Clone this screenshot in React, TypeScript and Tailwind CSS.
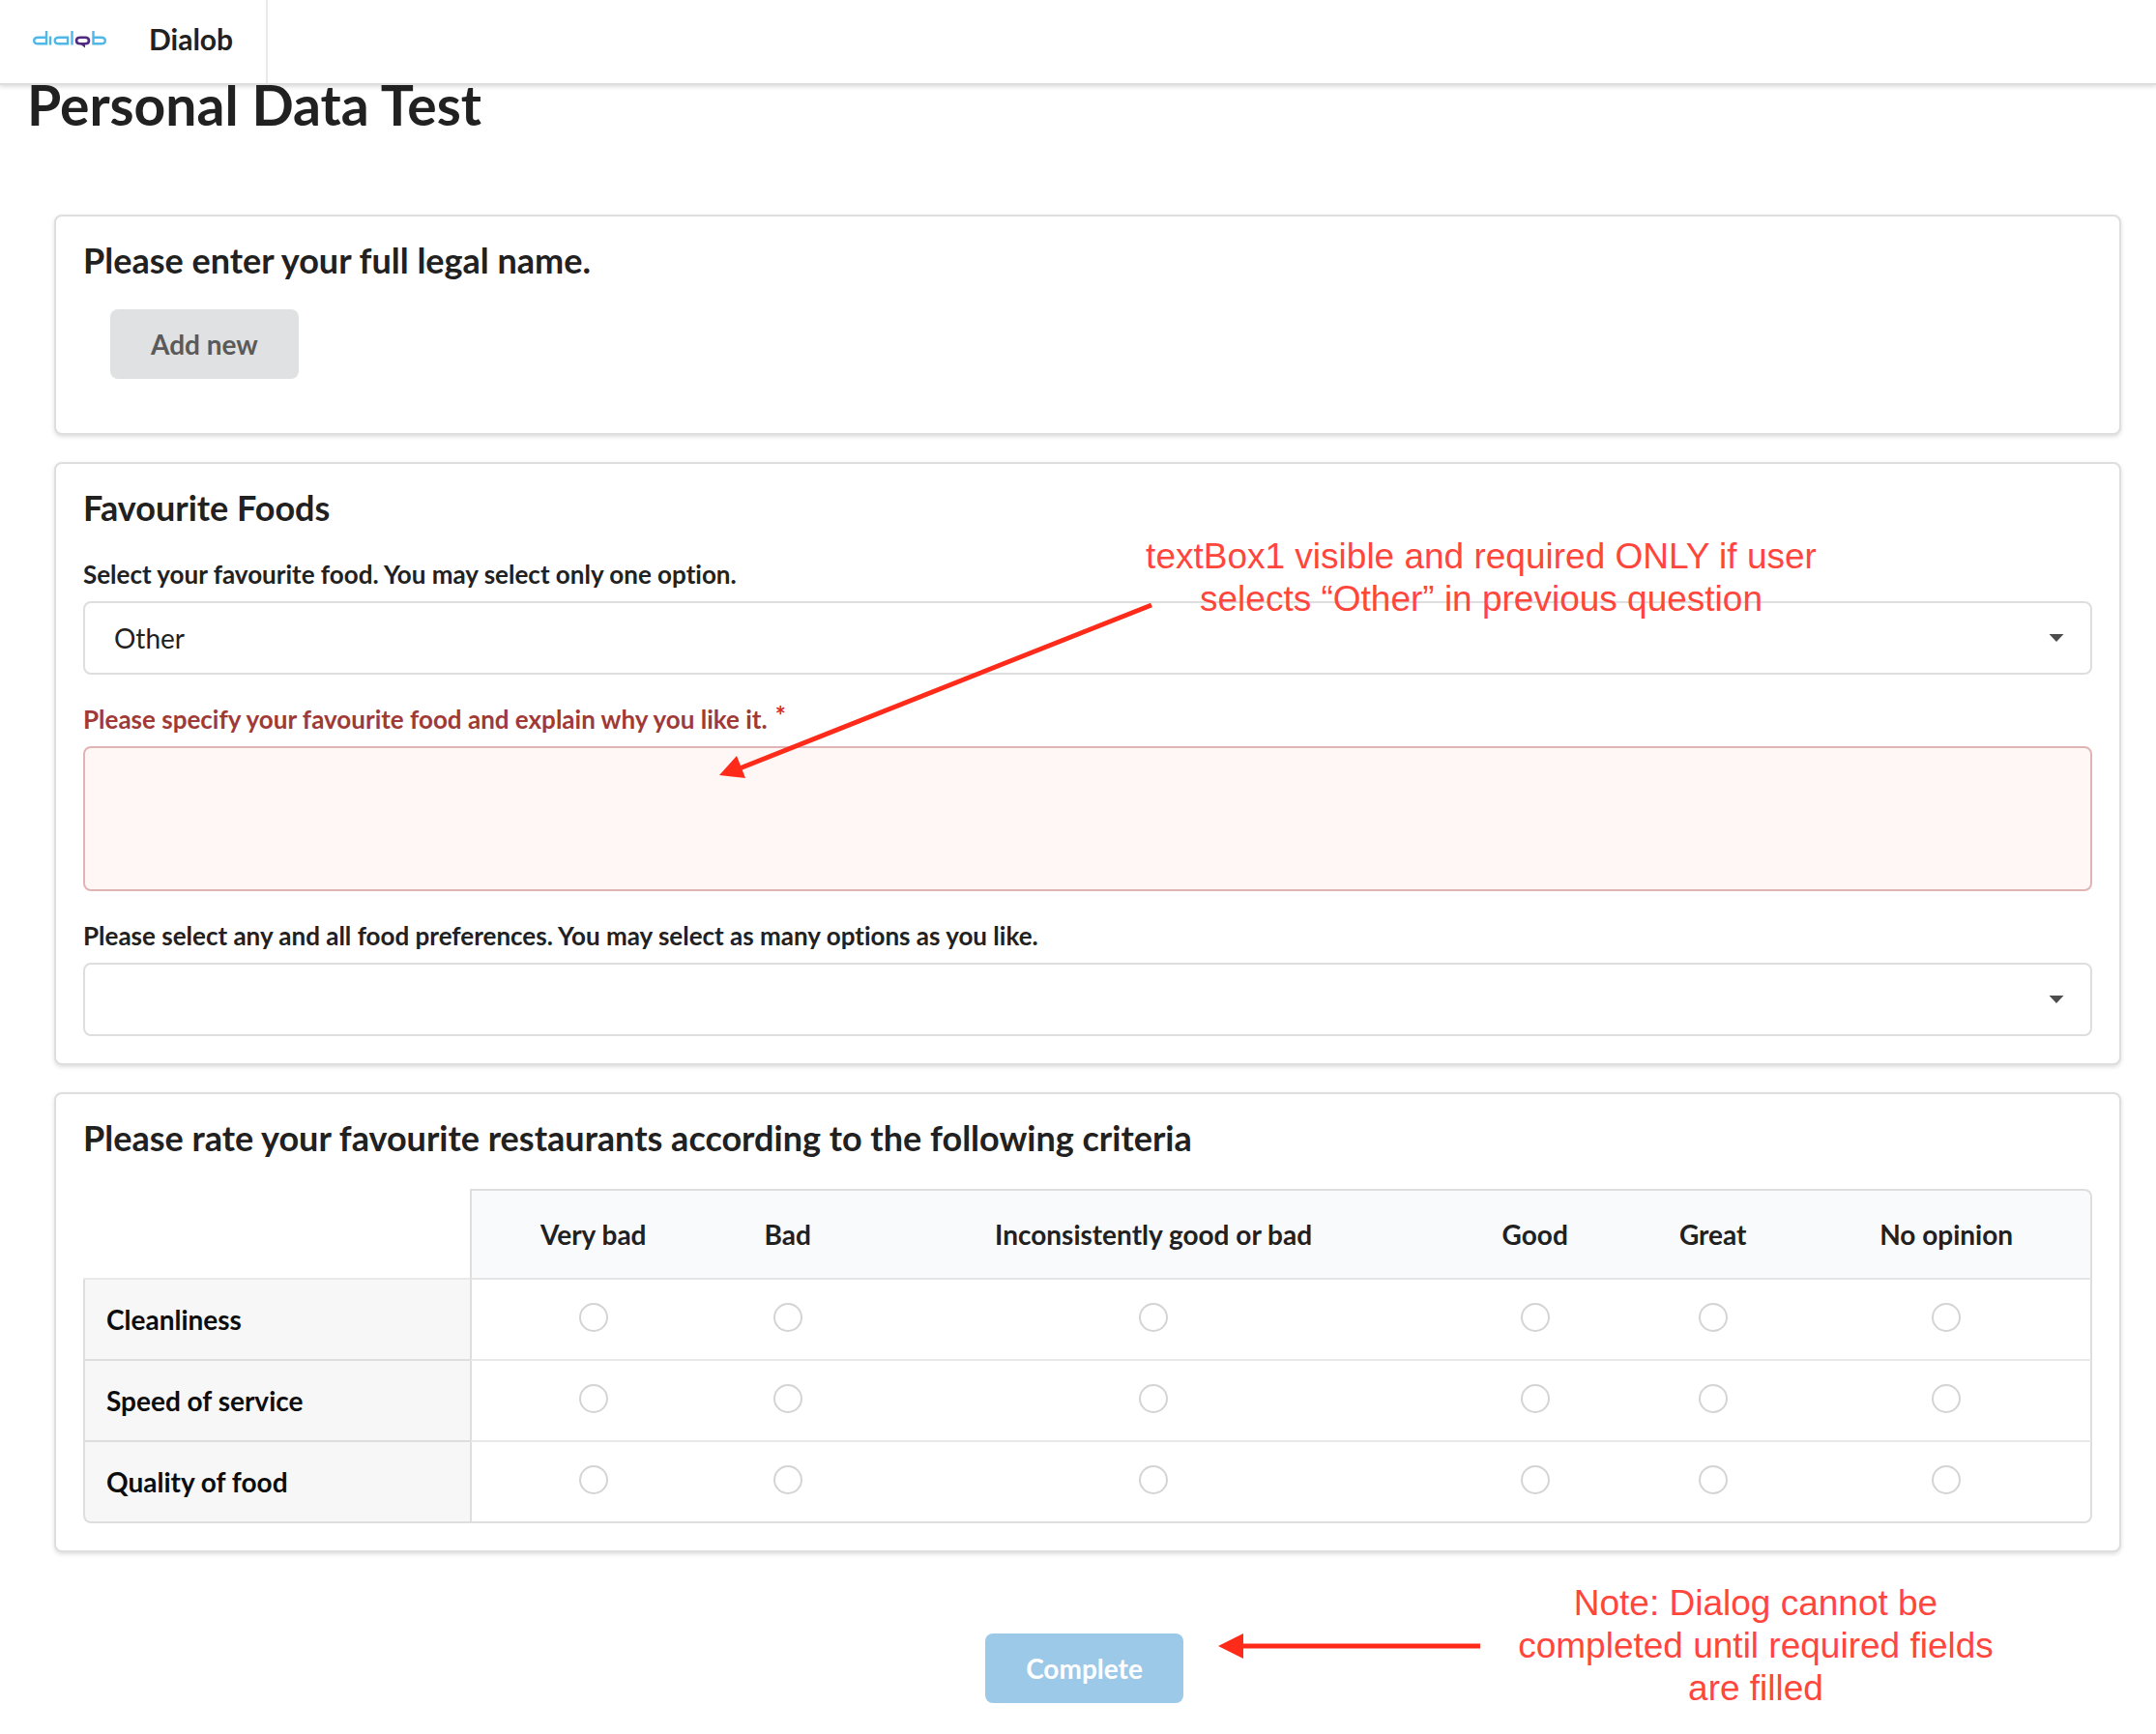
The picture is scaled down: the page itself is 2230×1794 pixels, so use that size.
import React from "react";

const columns = ["Very bad", "Bad", "Inconsistently good or bad", "Good", "Great", "No opinion"];
const rows = ["Cleanliness", "Speed of service", "Quality of food"];

function Logo() {
  return (
    <svg viewBox="0 0 80 20" className="h-5 w-20" fill="none" strokeWidth="2.4" aria-label="dialob" role="img">
      <g stroke="#4fb8e8">
        <path d="M16 2V15.300H7.500Q3.200 15.300 3.200 12T7.500 8.700H16" />
        <path d="M20 7.500V16.500" />
        <path d="M38 16.500V8.700H29Q24.700 8.700 24.700 12T29 15.300H38" />
        <path d="M42.500 2V16.500" />
        <path d="M64.500 2V15.300H72.500Q76.800 15.300 76.800 12T72.500 8.700H64.500" />
      </g>
      <path d="M51 8.700H56Q60 8.700 60 12T56 15.300H51Q47 15.300 47 12T51 8.700Z" stroke="#4f2a7f" strokeWidth="2.600" />
      <path d="M51.500 16H56V19.500Z" fill="#4f2a7f" />
    </svg>
  );
}

function Card({ title, children }: { title: string; children: React.ReactNode }) {
  return (
    <section className="relative rounded-lg border-2 border-[#dededf] bg-white p-7 shadow-[0_2px_4px_rgba(34,36,38,0.15)]">
      <h2 className="-mt-1 mb-[30px] text-4xl leading-[42px] font-bold">{title}</h2>
      {children}
    </section>
  );
}

function Dropdown({ id, options }: { id: string; options: string[] }) {
  return (
    <div className="relative">
      <select
        id={id}
        className="block h-19 w-full appearance-none rounded-lg border-2 border-[#dededf] bg-white px-[30px] text-[28px] text-[#212121]"
      >
        {options.map((o) => (
          <option key={o}>{o}</option>
        ))}
      </select>
      <svg viewBox="0 0 16 8" className="pointer-events-none absolute top-[34px] right-[29px] h-2 w-4" aria-hidden="true">
        <path d="M0.500 0H15.500L8 8Z" fill="#4d4d4d" />
      </svg>
    </div>
  );
}

const labelClass = "mb-2.5 block text-[26px] leading-9 font-bold";

export default function App() {
  return (
    <div className="min-h-screen bg-white font-['Lato',sans-serif] text-[#212121] [font-variant-ligatures:none]">
      <header className="relative flex h-22 border-b-2 border-[#dededf] bg-white shadow-[0_2px_4px_rgba(34,36,38,0.15)]">
        <div className="flex items-center gap-[42px] border-r-2 border-[#e9e9e9] pr-[34px] pb-1.5 pl-8">
          <Logo />
          <span className="text-[30px] leading-10 font-bold">Dialob</span>
        </div>
      </header>

      <main className="pb-8">
        <h1 className="-mt-4 px-7 text-[57px] leading-[72px] font-bold">Personal Data Test</h1>

        <form className="mt-[78px] mr-9 ml-14 flex flex-col gap-7" onSubmit={(e) => e.preventDefault()}>
          <Card title="Please enter your full legal name.">
            <button type="button" className="mb-7 ml-7 block h-18 rounded-lg bg-[#e0e1e2] px-[42px] text-[28px] font-bold text-[#5a5a5a]">
              Add new
            </button>
          </Card>

          <Card title="Favourite Foods">
            <div className="flex flex-col gap-7">
              <div>
                <label htmlFor="food" className={labelClass}>
                  Select your favourite food. You may select only one option.
                </label>
                <Dropdown id="food" options={["Other"]} />
              </div>
              <div>
                <label htmlFor="reason" className="mb-2.5 block text-[26px] leading-9 font-bold text-[#9f3a38]">
                  Please specify your favourite food and explain why you like it.
                  <span className="ml-2 inline-block -translate-y-1 text-[#db2828]">*</span>
                </label>
                <textarea
                  id="reason"
                  required
                  className="block h-[150px] w-full resize-none rounded-lg border-2 border-[#e0b4b4] bg-[#fff6f6] p-7 text-[28px] outline-none"
                />
              </div>
              <div>
                <label htmlFor="preferences" className={labelClass}>
                  Please select any and all food preferences. You may select as many options as you like.
                </label>
                <Dropdown id="preferences" options={[""]} />
              </div>
            </div>

            <svg viewBox="0 0 450 182" className="pointer-events-none absolute top-[143px] left-[685px] h-[182px] w-[450px]" aria-hidden="true">
              <path d="M22 172L448 3" stroke="#fe2b1b" strokeWidth="5" />
              <path d="M1 179L19 159L28 182Z" fill="#fe2b1b" />
            </svg>
            <p className="pointer-events-none absolute top-[74px] left-[1114px] w-[720px] text-center font-['Liberation_Sans',sans-serif] text-[37px] leading-[44px] text-[#ff463c]">
              textBox1 visible and required ONLY if user selects “Other” in previous question
            </p>
          </Card>

          <Card title="Please rate your favourite restaurants according to the following criteria">
            <table className="mt-8 w-full border-separate border-spacing-0 text-[28px]">
              <thead>
                <tr className="h-[94px]">
                  <td className="border-b-2 border-[#e9e9e9]" />
                  {columns.map((c) => (
                    <th
                      key={c}
                      scope="col"
                      className="border-t-2 border-b-2 border-t-[#dededf] border-b-[#e4e5e6] bg-[#f9fafb] px-[22px] font-bold last:rounded-tr-lg last:border-r-2 last:border-r-[#dededf] first-of-type:border-l-2 first-of-type:border-l-[#dededf]"
                    >
                      {c}
                    </th>
                  ))}
                </tr>
              </thead>
              <tbody>
                {rows.map((r) => (
                  <tr key={r} className="group h-[84px]">
                    <th
                      scope="row"
                      className="border-b-2 border-l-2 border-[#dededf] bg-[#f7f7f7] pr-[18px] pl-[22px] text-left font-bold text-[#0d0d0d] group-last:rounded-bl-lg"
                    >
                      {r}
                    </th>
                    {columns.map((c) => (
                      <td
                        key={c}
                        className="border-b-2 border-[#e9e9e9] px-[22px] group-last:border-b-[#dededf] last:border-r-2 last:border-r-[#dededf] group-last:last:rounded-br-lg first-of-type:border-l-2 first-of-type:border-l-[#dededf]"
                      >
                        <input
                          type="radio"
                          name={r}
                          aria-label={`${r}: ${c}`}
                          className="mx-auto mb-1 block size-[30px] appearance-none rounded-full border-2 border-[#d4d4d5] bg-white"
                        />
                      </td>
                    ))}
                  </tr>
                ))}
              </tbody>
            </table>
          </Card>

          <div className="relative mt-14 flex justify-center">
            <button type="submit" disabled className="mr-[7px] block h-18 rounded-lg bg-[#9dc9e9] px-[42px] text-[28px] font-bold text-white">
              Complete
            </button>
            <div className="pointer-events-none absolute -top-[53px] left-[1204px] flex items-center gap-6">
              <svg viewBox="0 0 272 26" className="h-[26px] w-[272px]" aria-hidden="true">
                <path d="M24 13H271" stroke="#fe2b1b" strokeWidth="5" />
                <path d="M0 13L26 0V26Z" fill="#fe2b1b" />
              </svg>
              <p className="w-[520px] text-center font-['Liberation_Sans',sans-serif] text-[37px] leading-[44px] text-[#ff463c]">
                Note: Dialog cannot be completed until required fields are filled
              </p>
            </div>
          </div>
        </form>
      </main>
    </div>
  );
}
